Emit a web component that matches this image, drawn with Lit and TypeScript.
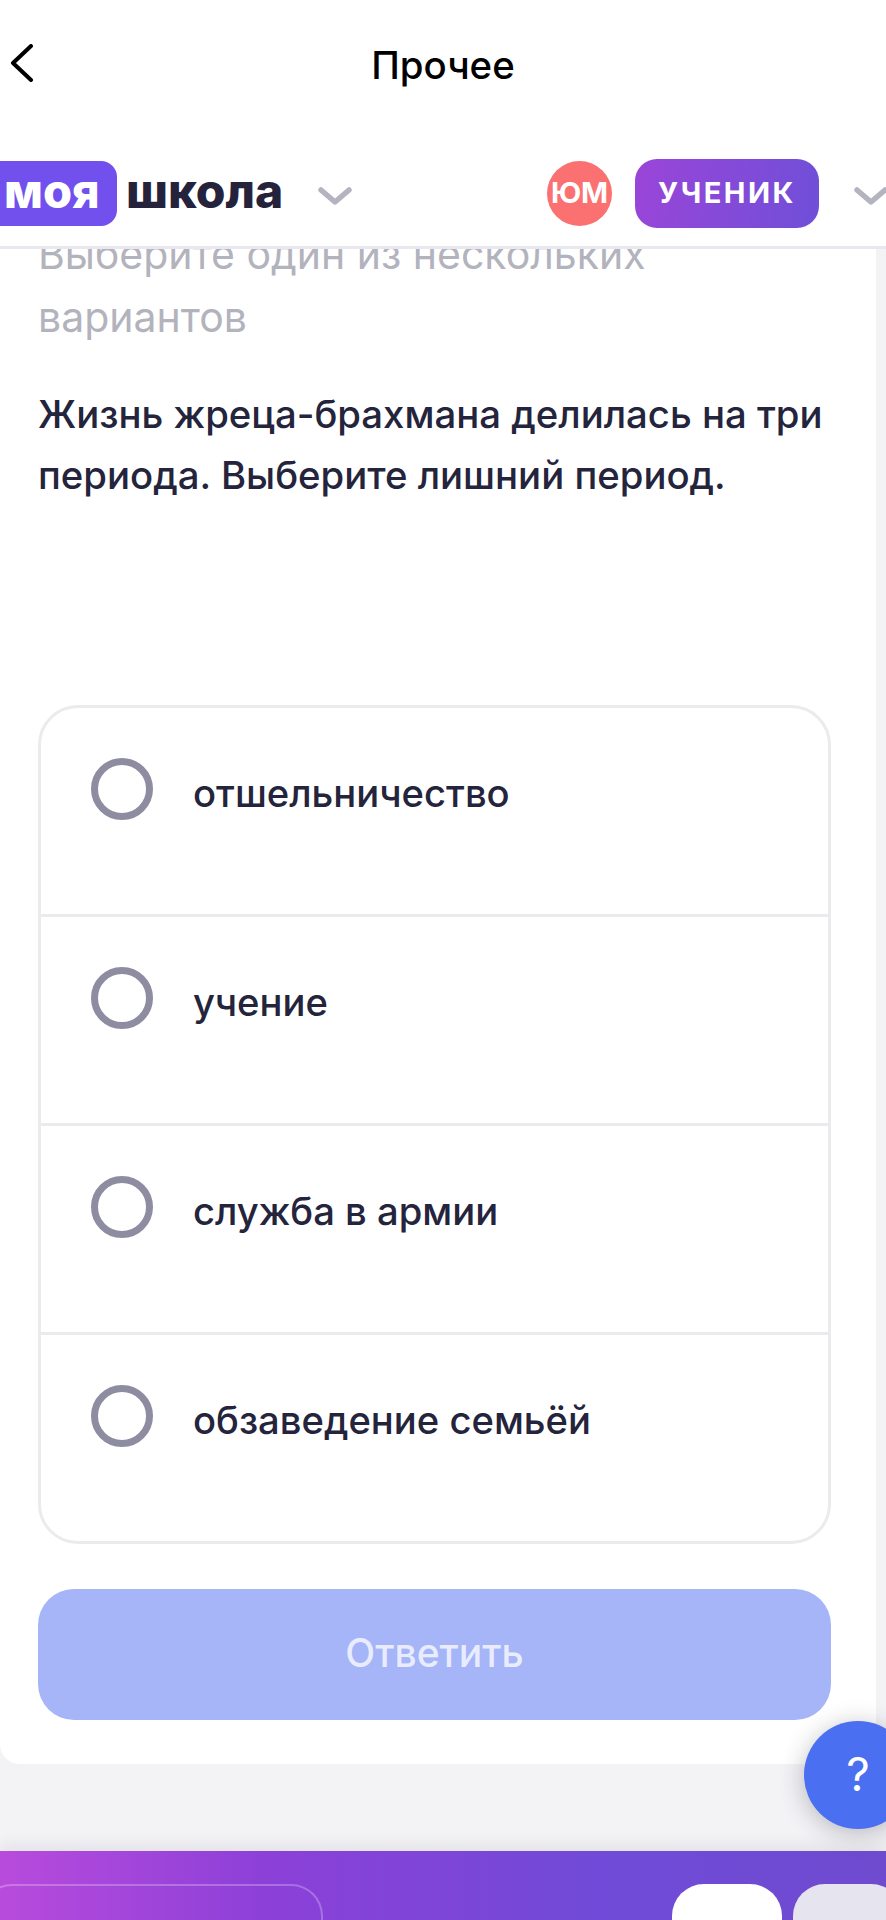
import { LitElement, html, css, svg } from "lit"
import { customElement } from "lit/decorators.js"

const OPTIONS = ["отшельничество", "учение", "служба в армии", "обзаведение семьёй"]

const chevron = svg`<path d="M3 3 L17 15 L31 3" fill="none" stroke="#b4b4c0" stroke-width="5.5" stroke-linecap="round" stroke-linejoin="round"/>`

@customElement("app-root")
export class AppRoot extends LitElement {
  static styles = css`
    :host {
      display: block;
      position: relative;
      height: 1920px;
      overflow: hidden;
      background: #f3f3f6;
      font-family: Inter, "Noto Sans", sans-serif;
      color: #24243c;
    }

    .page {
      display: flex;
      flex-direction: column;
      height: 100%;
    }

    .topbar {
      height: 130px;
      flex: none;
      background: #fff;
      display: grid;
      grid-template-columns: 1fr auto 1fr;
      align-items: center;
    }

    .back {
      display: block;
      margin: -4px 0 0 10px;
    }

    .topbar h1 {
      margin: 0;
      font-size: 38.4px;
      font-weight: 500;
      color: #000;
    }

    .header {
      height: 119px;
      flex: none;
      box-sizing: border-box;
      padding-top: 10px;
      background: #fff;
      border-bottom: 3px solid #e8e8ee;
      display: flex;
      align-items: center;
      white-space: nowrap;
    }

    .logo-mark {
      margin-left: -20px;
      width: 137px;
      height: 65px;
      flex: none;
      box-sizing: border-box;
      padding-left: 24px;
      border-radius: 0 16px 16px 0;
      background: #7150ee;
      color: #fff;
      font-size: 47px;
      font-weight: 800;
      line-height: 60px;
    }

    .logo-text {
      width: 157px;
      flex: none;
      margin: 0 0 6px 9px;
      font-size: 48px;
      font-weight: 800;
      color: #25233c;
    }

    .school-chevron {
      flex: none;
      margin-left: 35px;
      margin-top: 6px;
    }

    .avatar {
      flex: none;
      margin-left: 195px;
      width: 65px;
      height: 65px;
      border-radius: 50%;
      background: #fb7171;
      color: #fff;
      font-size: 29px;
      font-weight: 700;
      line-height: 63px;
      text-align: center;
    }

    .role {
      flex: none;
      margin-left: 23px;
      width: 184px;
      height: 69px;
      border-radius: 22px;
      background: linear-gradient(100deg, #9a45d8, #6f4fd8);
      color: #fff;
      font-size: 29px;
      font-weight: 700;
      letter-spacing: 2.5px;
      line-height: 67px;
      text-align: center;
    }

    .role-chevron {
      margin-left: 35px;
      margin-top: 6px;
      flex: none;
    }

    .scroller {
      height: 1515px;
      flex: none;
      overflow: hidden;
      border-radius: 0 0 0 20px;
    }

    /* flow-root so the hint's negative margin scrolls the text, not the card */
    .card {
      display: flow-root;
      width: 876px;
      height: 1515px;
      box-sizing: border-box;
      padding: 0 45px 0 38px;
      background: #fff;
    }

    .hint {
      margin: -26px 0 0;
      width: 640px;
      font-size: 41px;
      line-height: 63px;
      color: #b3b3bd;
    }

    .question {
      margin: 35px 0 0;
      font-size: 38.3px;
      font-weight: 450;
      line-height: 61px;
    }

    .options {
      margin-top: 199px;
      border: 3px solid #ebebee;
      border-radius: 40px;
    }

    .option {
      height: 206px;
      box-sizing: border-box;
      padding: 50px 0 0 50px;
      display: flex;
      gap: 40px;
      font-size: 38.2px;
      font-weight: 450;
      line-height: 70px;
    }

    .option + .option {
      height: 209px;
      border-top: 3px solid #ebebee;
    }

    .radio {
      width: 62px;
      height: 62px;
      flex: none;
      box-sizing: border-box;
      border: 7px solid #8e8ca0;
      border-radius: 50%;
    }

    .submit {
      display: block;
      width: 100%;
      height: 131px;
      margin-top: 45px;
      padding: 0 0 4px;
      border: 0;
      border-radius: 36px;
      background: #a5b5f8;
      color: #e8ecfc;
      font: 500 39px Inter, "Noto Sans", sans-serif;
    }

    .footer {
      margin-top: 87px;
      flex: 1;
      display: flex;
      align-items: flex-start;
      padding-top: 33px;
      overflow: hidden;
      background: linear-gradient(90deg, #b84bdc 0%, #8c40d8 30%, #6f4bd8 70%, #6f4bd0 100%);
      box-shadow: 0 -6px 14px rgba(40, 40, 60, 0.08);
    }

    .outline {
      margin-left: -20px;
      width: 343px;
      height: 60px;
      flex: none;
      box-sizing: border-box;
      border: 2px solid rgba(255, 255, 255, 0.25);
      border-bottom: 0;
      border-radius: 32px 32px 0 0;
    }

    .tab {
      width: 110px;
      height: 60px;
      flex: none;
      border-radius: 32px 32px 0 0;
      background: #fff;
    }

    .tab.first {
      margin-left: 349px;
    }

    .tab.second {
      margin-left: 11px;
      background: #e6e4ee;
    }

    .help {
      position: absolute;
      left: 804px;
      top: 1721px;
      width: 108px;
      height: 108px;
      border-radius: 50%;
      background: #4a6ff0;
      box-shadow: 0 4px 24px rgba(40, 40, 60, 0.3);
      color: #fff;
      font-size: 46px;
      line-height: 106px;
      text-align: center;
    }
  `

  render() {
    return html`
      <div class="page">
        <div class="topbar">
          <svg class="back" width="24" height="38" viewBox="0 0 24 38">
            <path d="M21 2 L3 19 L21 36" fill="none" stroke="#000" stroke-width="4" stroke-linecap="round" stroke-linejoin="round"/>
          </svg>
          <h1>Прочее</h1>
        </div>
        <div class="header">
          <div class="logo-mark">моя</div>
          <div class="logo-text">школа</div>
          <svg class="school-chevron" width="34" height="18" viewBox="0 0 34 18">${chevron}</svg>
          <div class="avatar">ЮМ</div>
          <div class="role">УЧЕНИК</div>
          <svg class="role-chevron" width="34" height="18" viewBox="0 0 34 18">${chevron}</svg>
        </div>
        <div class="scroller">
          <div class="card">
            <p class="hint">Выберите один из нескольких вариантов</p>
            <p class="question">Жизнь жреца-брахмана делилась на три периода. Выберите лишний период.</p>
            <div class="options">
              ${OPTIONS.map(
                (o) => html`<div class="option"><span class="radio"></span><span>${o}</span></div>`
              )}
            </div>
            <button class="submit">Ответить</button>
          </div>
        </div>
        <div class="footer">
          <div class="outline"></div>
          <div class="tab first"></div>
          <div class="tab second"></div>
        </div>
      </div>
      <div class="help">?</div>
    `
  }
}

declare global {
  interface HTMLElementTagNameMap {
    "app-root": AppRoot
  }
}
